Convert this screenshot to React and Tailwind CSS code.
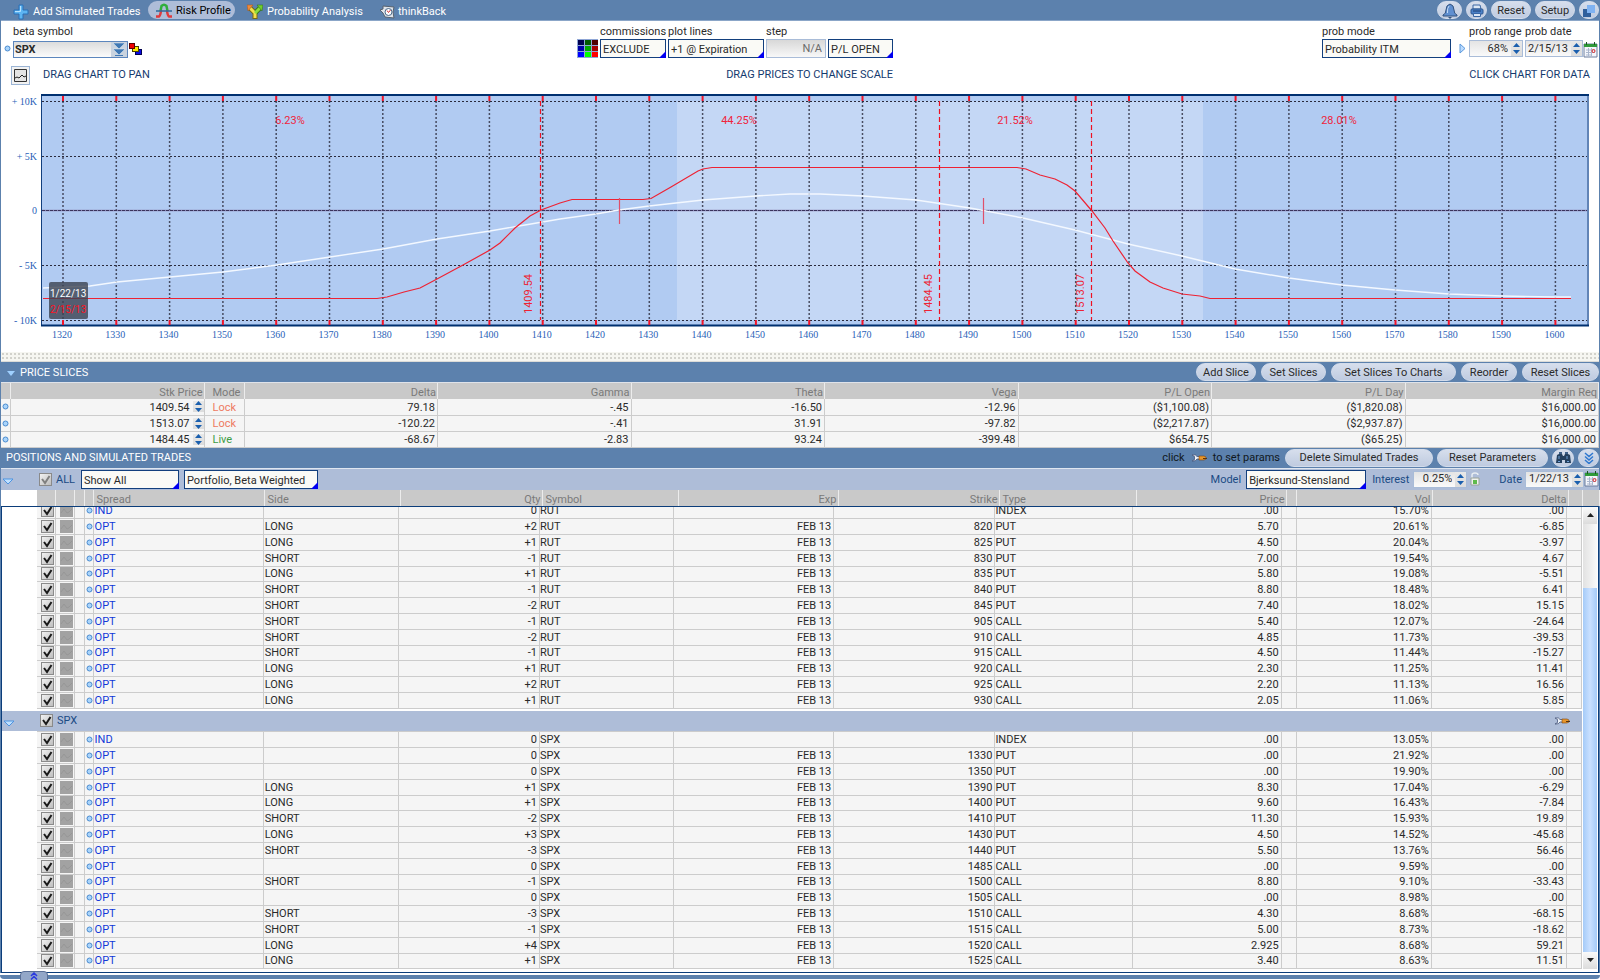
import React from 'react';
import clsx from 'clsx';

const RUT_ROWS = [
  ['IND', '', '0', '', '', 'INDEX', '.00', '15.70%', '.00'],
  ['OPT', 'LONG', '+2', 'FEB 13', '820', 'PUT', '5.70', '20.61%', '-6.85'],
  ['OPT', 'LONG', '+1', 'FEB 13', '825', 'PUT', '4.50', '20.04%', '-3.97'],
  ['OPT', 'SHORT', '-1', 'FEB 13', '830', 'PUT', '7.00', '19.54%', '4.67'],
  ['OPT', 'LONG', '+1', 'FEB 13', '835', 'PUT', '5.80', '19.08%', '-5.51'],
  ['OPT', 'SHORT', '-1', 'FEB 13', '840', 'PUT', '8.80', '18.48%', '6.41'],
  ['OPT', 'SHORT', '-2', 'FEB 13', '845', 'PUT', '7.40', '18.02%', '15.15'],
  ['OPT', 'SHORT', '-1', 'FEB 13', '905', 'CALL', '5.40', '12.07%', '-24.64'],
  ['OPT', 'SHORT', '-2', 'FEB 13', '910', 'CALL', '4.85', '11.73%', '-39.53'],
  ['OPT', 'SHORT', '-1', 'FEB 13', '915', 'CALL', '4.50', '11.44%', '-15.27'],
  ['OPT', 'LONG', '+1', 'FEB 13', '920', 'CALL', '2.30', '11.25%', '11.41'],
  ['OPT', 'LONG', '+2', 'FEB 13', '925', 'CALL', '2.20', '11.13%', '16.56'],
  ['OPT', 'LONG', '+1', 'FEB 13', '930', 'CALL', '2.05', '11.06%', '5.85'],
];

const SPX_ROWS = [
  ['IND', '', '0', '', '', 'INDEX', '.00', '13.05%', '.00'],
  ['OPT', '', '0', 'FEB 13', '1330', 'PUT', '.00', '21.92%', '.00'],
  ['OPT', '', '0', 'FEB 13', '1350', 'PUT', '.00', '19.90%', '.00'],
  ['OPT', 'LONG', '+1', 'FEB 13', '1390', 'PUT', '8.30', '17.04%', '-6.29'],
  ['OPT', 'LONG', '+1', 'FEB 13', '1400', 'PUT', '9.60', '16.43%', '-7.84'],
  ['OPT', 'SHORT', '-2', 'FEB 13', '1410', 'PUT', '11.30', '15.93%', '19.89'],
  ['OPT', 'LONG', '+3', 'FEB 13', '1430', 'PUT', '4.50', '14.52%', '-45.68'],
  ['OPT', 'SHORT', '-3', 'FEB 13', '1440', 'PUT', '5.50', '13.76%', '56.46'],
  ['OPT', '', '0', 'FEB 13', '1485', 'CALL', '.00', '9.59%', '.00'],
  ['OPT', 'SHORT', '-1', 'FEB 13', '1500', 'CALL', '8.80', '9.10%', '-33.43'],
  ['OPT', '', '0', 'FEB 13', '1505', 'CALL', '.00', '8.98%', '.00'],
  ['OPT', 'SHORT', '-3', 'FEB 13', '1510', 'CALL', '4.30', '8.68%', '-68.15'],
  ['OPT', 'SHORT', '-1', 'FEB 13', '1515', 'CALL', '5.00', '8.73%', '-18.62'],
  ['OPT', 'LONG', '+4', 'FEB 13', '1520', 'CALL', '2.925', '8.68%', '59.21'],
  ['OPT', 'LONG', '+1', 'FEB 13', '1525', 'CALL', '3.40', '8.63%', '11.51'],
];

const SLICES = [
  ['1409.54', 'Lock', '79.18', '-.45', '-16.50', '-12.96', '($1,100.08)', '($1,820.08)', '$16,000.00'],
  ['1513.07', 'Lock', '-120.22', '-.41', '31.91', '-97.82', '($2,217.87)', '($2,937.87)', '$16,000.00'],
  ['1484.45', 'Live', '-68.67', '-2.83', '93.24', '-399.48', '$654.75', '($65.25)', '$16,000.00'],
];

/* ---------- icons ---------- */

const PlusIcon = () => (
  <svg width="16" height="16" viewBox="0 0 16 16" className="shrink-0">
    <path d="M6 1h4v5h5v4h-5v5H6v-5H1V6h5z" fill="#5db4f2" stroke="#2a6fb5" />
    <path d="M7.5 2v5.5H2" stroke="#b5e2ff" fill="none" />
  </svg>
);

const RiskIcon = () => (
  <svg width="16" height="16" viewBox="0 0 16 16" className="shrink-0">
    <path d="M4.500 8l1-5q2.500-2.500 5 0l1 5" fill="none" stroke="#2fae3c" strokeWidth="2.500" />
    <path d="M0 13.500h3q1.500-1 2-6M16 13.500h-3q-1.500-1-2-6" fill="none" stroke="#e0393c" strokeWidth="2.500" />
    <path d="M0 8h16" stroke="#2d6a9c" strokeWidth="1.500" />
  </svg>
);

const ForkIcon = () => (
  <svg width="16" height="16" viewBox="0 0 16 16" strokeLinejoin="round" className="shrink-0">
    <path d="M8 15V9L3 4" fill="none" stroke="#7a6a10" strokeWidth="5" />
    <path d="M8 9l5-5" stroke="#3a7d18" strokeWidth="5" />
    <path d="M8 14V9L3 4" fill="none" stroke="#f3e04a" strokeWidth="3" />
    <path d="M0 1h6L1 7z" fill="#f08a3a" stroke="#a8521a" strokeWidth="0.500" />
    <path d="M8 9l5-5" stroke="#8fdc3c" strokeWidth="3" />
    <path d="M16 1h-6l5 6z" fill="#6fcf2e" stroke="#2e6b12" strokeWidth="0.500" />
  </svg>
);

const BackIcon = () => (
  <svg width="15" height="16" viewBox="0 0 15 16" className="shrink-0">
    <path d="M3 2l11 1-1 5 1 6-9-1-2-4-3-3 3-1z" fill="#dfe4ea" stroke="#56616e" />
    <circle cx="8.500" cy="8" r="3.500" fill="#fff" stroke="#4a6a8c" />
    <path d="M7 6.500l1.500 2L10.500 6" stroke="#d03030" fill="none" />
  </svg>
);

const BellIcon = () => (
  <svg width="18" height="16" viewBox="0 0 18 16">
    <path d="M9 1q4 1 4 6 0 4 3 5v1H2v-1q3-1 3-5 0-5 4-6z" fill="#5f8fd0" stroke="#33537f" />
    <path d="M8 3q-2 2-1.500 7" stroke="#c3dbf7" fill="none" />
    <path d="M7 14h4l-2 2z" fill="#33537f" />
  </svg>
);

const PrinterIcon = () => (
  <svg width="14" height="14" viewBox="0 0 14 14">
    <path d="M3 1h7l1 4H3z" fill="#dbe7f5" stroke="#3a67a4" />
    <rect x="1" y="5" width="12" height="5" rx="1" fill="#4b81c8" stroke="#2c568f" />
    <path d="M3.500 9.500h7v3h-7z" fill="#dbe7f5" stroke="#3a67a4" />
    <path d="M3 7h8" stroke="#1e3f70" />
  </svg>
);

const DetachIcon = () => (
  <svg width="12" height="12" viewBox="0 0 12 12">
    <path d="M0 4h8v8H0z" fill="#2f5f9c" />
    <path d="M4 0h8v8H4z" fill="#7fb2f2" />
  </svg>
);

const SquaresIcon = () => (
  <svg width="13" height="12" viewBox="0 0 13 12" shapeRendering="crispEdges">
    <rect x="6" y="6" width="6" height="5" fill="#0a0ae0" stroke="#000050" />
    <path d="M3.500 3.500h6v5h-6z" fill="#ffee00" stroke="#4a4000" />
    <path d="M0.500 0.500h5v5h-5z" fill="#f00000" stroke="#5a0000" />
  </svg>
);

const PaletteIcon = () => (
  <svg width="21" height="19" viewBox="0 0 21 19" shapeRendering="crispEdges">
    <path d="M0 0h21v19H0z" fill="#8fa6d6" />
    {['#000050', '#005a00', '#500000', '#0000a8', '#00a800', '#a80000', '#0000ff', '#00ff00', '#ff0000'].map((c, i) => (
      <rect key={c} x={1 + (i % 3) * 7} y={1 + Math.floor(i / 3) * 6} width="6" height="5" fill={c} />
    ))}
  </svg>
);

const CalendarIcon = () => (
  <svg width="15" height="16" viewBox="0 0 15 16" className="shrink-0">
    <path d="M1 2h13v13H1z" fill="#f4f6fb" stroke="#6c7f9e" />
    <path d="M1 2h13v3H1z" fill="#2f9a3a" />
    <path d="M3.500 0v3M11.500 0v3" stroke="#17591e" />
    <path d="M3 8h9M3 10.500h9M3 13h6M5.500 6v8M8.500 6v8" stroke="#a9b6cd" />
    <circle cx="10.500" cy="9" r="1.500" fill="none" stroke="#e02a2a" />
  </svg>
);

const WrenchIcon = () => (
  <svg width="16" height="8" viewBox="0 0 16 8">
    <path d="M1 1q4-1 5 1.500h3v2.500H6Q5 7.500 1 7l2.500-1.500V2.500z" fill="#eef2f8" stroke="#46557a" strokeWidth="0.800" />
    <path d="M8 2h5l2 1v2l-2 1H8z" fill="#e8962a" stroke="#7a4410" strokeWidth="0.600" />
    <path d="M12 4.500h4" stroke="#5a3410" />
  </svg>
);

const BinocularsIcon = () => (
  <svg width="15" height="12" viewBox="0 0 15 12">
    <path d="M1 3l2-1h3l1 2h1l1-2h3l2 1 1 8H9V8H6v3H0z" fill="#24405f" />
    <path d="M3 4v3M11 4v3M2 9.500h2M11 9.500h2" stroke="#6fa0d8" />
    <path d="M3 0h3v2H3zM9 0h3v2H9z" fill="#3b5d86" />
  </svg>
);

const ChevronsIcon = () => (
  <svg width="10" height="12" viewBox="0 0 10 12">
    <path d="M1 1l4 3.500L9 1M1 4.500L5 8l4-3.500M1 8l4 3.500L9 8" fill="none" stroke="#2f78d0" strokeWidth="1.500" />
  </svg>
);

const LockIcon = () => (
  <svg width="10" height="14" viewBox="0 0 10 14">
    <path d="M2 6V3q0-2 3-2t3 2" fill="none" stroke="#e8edf2" strokeWidth="1.500" />
    <path d="M1 6h8v7H1z" fill="#f0f2ee" stroke="#9aa39a" />
    <path d="M3 8h4v4H3z" fill="#5fba4c" />
  </svg>
);

const Dot = () => (
  <svg width="7" height="7" viewBox="0 0 7 7" className="block shrink-0">
    <circle cx="3.500" cy="3.500" r="2.500" fill="#a9d4fb" stroke="#4a8bd0" />
  </svg>
);

const Collapse = () => (
  <svg width="12" height="7" viewBox="0 0 12 7">
    <path d="M1 1h10L6 6z" fill="#bfe0ff" stroke="#4d93e0" />
  </svg>
);

/* ---------- controls ---------- */

const PillButton = ({ className, children, ...rest }) => (
  <button
    type="button"
    className={clsx(
      'flex h-[18px] items-center justify-center whitespace-nowrap rounded-full border border-[#d3dceb] bg-gradient-to-b from-[#d6deec] to-[#bfcbe0] pt-px text-[#2a2a2a]',
      className
    )}
    {...rest}
  >
    {children}
  </button>
);

const Picker = ({ className, value, ...rest }) => (
  <span className={clsx('relative block h-[19px] shrink-0', className)}>
    <select
      className="block h-full w-full appearance-none border border-[#123f7d] bg-[#fafaf6] pl-[2px] pt-[2px] text-[11px] leading-[15px] text-[#2a2a2a] outline-none"
      defaultValue={value}
      {...rest}
    >
      <option>{value}</option>
    </select>
    <svg width="7" height="7" viewBox="0 0 7 7" className="pointer-events-none absolute bottom-0 right-0">
      <path d="M7 0v7H0z" fill="#0000f0" />
    </svg>
  </span>
);

const Arrows = () => (
  <span className="flex w-[11px] shrink-0 flex-col justify-center gap-[3px] bg-gradient-to-b from-[#e8e8e8] to-[#dcdcdc]">
    <button type="button" aria-label="Increase">
      <svg width="7" height="4" viewBox="0 0 7 4" className="mx-auto block"><path d="M0 4l3.500-4L7 4z" fill="#1a5fae" /></svg>
    </button>
    <button type="button" aria-label="Decrease">
      <svg width="7" height="4" viewBox="0 0 7 4" className="mx-auto block"><path d="M0 0h7L3.500 4z" fill="#1a5fae" /></svg>
    </button>
  </span>
);

const Spinner = ({ className, value, ...rest }) => (
  <span className={clsx('flex h-[17px] shrink-0 border border-[#a9bcd8] bg-gradient-to-b from-[#e4e4e4] to-[#fafafa]', className)}>
    <input className="w-full min-w-0 bg-transparent pr-[3px] text-right outline-none" defaultValue={value} {...rest} />
    <Arrows />
  </span>
);

const Check = ({ label, dim }) => (
  <span className="relative block size-[13px] shrink-0">
    <input
      type="checkbox"
      aria-label={label}
      defaultChecked
      className="block size-[13px] appearance-none border border-[#8a8a8a] bg-gradient-to-br from-[#f2f2f2] to-[#bdbdbd]"
    />
    <svg width="13" height="13" viewBox="0 0 13 13" className="pointer-events-none absolute inset-0">
      <path d="M3 6l3 4 4.500-7" fill="none" stroke={dim ? '#808080' : '#1a1a1a'} strokeWidth="2" />
    </svg>
  </span>
);

const Field = ({ label, className, children }) => (
  <label className={clsx('flex flex-col whitespace-nowrap', className)}>
    <span className="h-[14px] leading-[14px]">{label}</span>
    {children}
  </label>
);

/* ---------- header ---------- */

const TopBar = () => (
  <header className="flex h-[21px] items-center justify-between border-b border-[#8ba6c8] bg-[#5c81ad] text-white">
    <nav className="flex items-center whitespace-nowrap">
      <button type="button" className="flex w-[135px] items-center gap-1 pl-[12px] pt-[3px]"><PlusIcon />Add Simulated Trades</button>
      <button type="button" className="ml-[12px] flex h-[18px] w-[87px] items-center gap-1 rounded-full bg-[#aebdd8] pl-[8px] pt-[2px] text-black">
        <RiskIcon />Risk Profile
      </button>
      <button type="button" className="ml-[12px] flex w-[121px] items-center gap-1 pt-[3px]"><ForkIcon />Probability Analysis</button>
      <button type="button" className="ml-[12px] flex items-center gap-[3px] pt-[3px]"><BackIcon />thinkBack</button>
    </nav>
    <div className="flex items-center gap-1">
      <PillButton className="w-[25px]" aria-label="Alerts"><BellIcon /></PillButton>
      <PillButton className="w-[21px]" aria-label="Print"><PrinterIcon /></PillButton>
      <PillButton className="w-[40px]">Reset</PillButton>
      <PillButton className="w-[40px]">Setup</PillButton>
      <PillButton className="w-[20px]" aria-label="Detach"><DetachIcon /></PillButton>
    </div>
  </header>
);

const Controls = () => (
  <section className="flex h-[41px] items-start justify-between pt-1 pr-px">
    <div className="flex w-[147px] items-end pl-[3px]">
      <span className="mb-[6px] mr-[2px]"><Dot /></span>
      <Field label="beta symbol" className="w-[115px]">
        <span className="mt-[2px] flex h-[17px] border border-[#5c86bd] bg-gradient-to-b from-[#dcdcdc] to-[#fbfbfb]">
          <input className="w-full min-w-0 bg-transparent pl-px font-bold outline-none" defaultValue="SPX" />
          <span className="flex w-[16px] shrink-0 items-center justify-center bg-[#c9d3df]">
            <svg width="12" height="13" viewBox="0 0 12 13">
              <path d="M0 0h12L6 6zM0 6h12l-6 6z" fill="#3f78b4" stroke="#e5eef7" strokeWidth="0.500" />
              <path d="M2 12.500h8" stroke="#3f78b4" />
            </svg>
          </span>
        </span>
      </Field>
      <span className="mb-[3px] ml-px"><SquaresIcon /></span>
    </div>

    <div className="flex items-end gap-[2px]">
      <PaletteIcon />
      <Field label="commissions" className="w-[66px]"><Picker value="EXCLUDE" /></Field>
      <Field label="plot lines" className="w-[96px]"><Picker value="+1 @ Expiration" /></Field>
      <Field label="step" className="w-[60px]">
        <input
          className="h-[19px] w-full border border-[#a9bcd8] bg-gradient-to-b from-[#d8d8d8] to-[#f8f8f8] pr-[3px] text-right text-[#6a6a6a] outline-none"
          defaultValue="N/A"
        />
      </Field>
      <Picker className="w-[65px]" value="P/L OPEN" aria-label="P/L display" />
    </div>

    <div className="flex items-end">
      <Field label="prob mode" className="w-[129px]"><Picker value="Probability ITM" /></Field>
      <svg width="7" height="11" viewBox="0 0 7 11" className="mb-1 ml-[8px] mr-[3px]">
        <path d="M1 1l5 4.500L1 10z" fill="#bcdcff" stroke="#5b98dc" />
      </svg>
      <Field label="prob range" className="mr-[2px] w-[54px]"><Spinner className="mb-px mt-px" value="68%" /></Field>
      <Field label="prob date" className="w-[58px]"><Spinner className="mb-px mt-px" value="2/15/13" /></Field>
      <CalendarIcon />
    </div>
  </section>
);

const Hints = () => (
  <section className="flex h-[24px] items-center justify-between pl-[10px] pr-[9px] pt-[2px] text-[#143a6e]">
    <div className="flex items-center gap-[13px]">
      <button type="button" aria-label="Chart style" className="flex size-[19px] items-center justify-center border border-[#9bb4d4] bg-[#f2f2f2]">
        <svg width="13" height="13" viewBox="0 0 13 13">
          <path d="M0.500 0.500h12v12h-12z" fill="#e4e4e4" stroke="#333" />
          <path d="M1 9l2-1 2 1 3-3 2 2 2-1" fill="none" stroke="#222" />
        </svg>
      </button>
      DRAG CHART TO PAN
    </div>
    <span>DRAG PRICES TO CHANGE SCALE</span>
    <span>CLICK CHART FOR DATA</span>
  </section>
);

/* ---------- chart ---------- */

const priceX = (p) => 63 + (p - 1320) * 5.33;
const PRICES = Array.from({ length: 29 }, (_, i) => 1320 + i * 10);
const LEVELS = [['+ 10K', 101], ['+ 5K', 156], ['0', 210], ['- 5K', 265], ['- 10K', 320]];
const ZONES = [['6.23%', 290], ['44.25%', 739], ['21.52%', 1015], ['28.01%', 1339]];
const MARKS = [['1409.54', 540.5, 532], ['1484.45', 939.5, 932], ['1513.07', 1091.5, 1084]];

const TODAY_LINE = '43,288 90,286 117,282 170,277 223,272 277,265 330,257 383,249 437,239 490,231 525,225 560,219 596,214 619,210 649,206 703,200 756,196 790,194 820,194 863,196 916,200 970,208 1023,218 1075,230 1128,244 1182,256 1235,269 1289,278 1342,285 1395,290 1449,294 1502,296 1555,297 1571,297';
const EXPIRY_LINE = '43,298.5 377,298.5 387,297 404,292 420,288 437,279 463,265 490,250 500,243 515,228 530,216 541,210 560,203 572,199.5 643,199.5 651,198.5 671,187 698,171 703,169 712,167.5 1017,167.5 1026,169 1040,175 1055,179 1067,185 1075,191 1092,211 1105,228 1113,241 1128,263 1135,271 1150,282 1163,288 1182,294 1200,296 1210,298.5 1571,298.5';

const RiskChart = () => (
  <svg viewBox="1 86 1598 266" className="block w-full" fontSize="11">
    <rect x="41" y="94" width="1548" height="232" fill="#b1cbf2" />
    <rect x="677" y="101" width="526" height="219" fill="#c4d7f5" />

    <g stroke="#2a2a3c" strokeDasharray="2 2">
      {PRICES.map((p) => <path key={p} d={`M${priceX(p)} 101V320`} strokeWidth="1.500" strokeOpacity="0.800" />)}
      {LEVELS.map(([t, y]) => t !== '0' && <path key={t} d={`M42 ${y + 0.5}H1587`} strokeWidth="1.200" />)}
    </g>
    <path d="M42 210.500H1587" stroke="#8a84b4" strokeWidth="1.500" />
    <path d="M42 210.500H1587" stroke="#3a345c" strokeDasharray="3 1" />

    <polyline points={TODAY_LINE} fill="none" stroke="#f3f8ff" strokeWidth="1.400" />
    <polyline points={EXPIRY_LINE} fill="none" stroke="#ee2233" strokeWidth="1.200" />
    <path d="M619.500 198V224M983.500 198V224" stroke="#e0506a" strokeWidth="1.200" />

    {MARKS.map(([t, x, tx]) => (
      <g key={t}>
        <path d={`M${x} 101V320`} stroke="#ee1122" strokeWidth="1.200" strokeDasharray="5 3" />
        <text transform={`translate(${tx} 314) rotate(-90)`} fill="#ee2233">{t}</text>
      </g>
    ))}
    {ZONES.map(([t, x]) => <text key={t} x={x} y="124" textAnchor="middle" fill="#f0233c">{t}</text>)}

    <path d="M41.500 326V95M1588 95V326" stroke="#123f7d" />
    <path d="M41 95H1589M41 325.500H1589" stroke="#003070" strokeWidth="2" />
    {PRICES.map((p) => <path key={p} d={`M${priceX(p)} 96V101M${priceX(p)} 320V325`} stroke="#f0142a" strokeWidth="2" />)}

    <rect x="49" y="282" width="39" height="37" rx="2" fill="#3c4250" fillOpacity="0.800" />
    <text x="50" y="297" fontSize="10" fill="#fff">1/22/13</text>
    <text x="50" y="313" fontSize="10" fill="#ff1122">2/15/13</text>

    <g fill="#2a5fb8" fontSize="10" className="font-['Liberation_Serif',serif]">
      {LEVELS.map(([t, y]) => <text key={t} x="37" y={y + 4} textAnchor="end">{t}</text>)}
      {PRICES.map((p) => <text key={p} x={priceX(p) - 1} y="338" textAnchor="middle">{p}</text>)}
    </g>
  </svg>
);

/* ---------- tables ---------- */

const SLICE_HEADS = ['Stk Price', 'Mode', 'Delta', 'Gamma', 'Theta', 'Vega', 'P/L Open', 'P/L Day', 'Margin Req'];

const PriceSlices = () => (
  <section>
    <div className="flex h-[21px] items-center border-b border-[#dfe3ea] bg-[#5c81ad] pl-[6px] text-white">
      <svg width="8" height="5" viewBox="0 0 8 5" className="mt-[3px]"><path d="M0 0h8L4 5z" fill="#9fd0ff" /></svg>
      <h2 className="ml-[5px] flex-1 pt-[2px]">PRICE SLICES</h2>
      <div className="flex gap-[5px]">
        <PillButton className="w-[60px]">Add Slice</PillButton>
        <PillButton className="w-[65px]">Set Slices</PillButton>
        <PillButton className="w-[125px]">Set Slices To Charts</PillButton>
        <PillButton className="w-[56px]">Reorder</PillButton>
        <PillButton className="w-[77px]">Reset Slices</PillButton>
      </div>
    </div>
    <table className="w-full table-fixed border-collapse text-right">
      <colgroup>
        <col className="w-[9px]" />
        <col className="w-[194px]" />
        <col className="w-[40px]" />
        <col span="7" />
      </colgroup>
      <thead>
        <tr className="h-[16px] bg-[#c9c9c9] leading-[13px] text-[#7a7a7a]">
          <th className="border-r border-[#ececec] p-0" aria-label="Marker" />
          {SLICE_HEADS.map((h) => (
            <th key={h} className={clsx('border-r border-[#ececec] p-0 pt-[2px] font-normal', h === 'Mode' ? 'pl-[8px] text-left' : 'pr-px')}>{h}</th>
          ))}
        </tr>
      </thead>
      <tbody>
        {SLICES.map(([price, mode, ...rest]) => (
          <tr key={price} className="h-[16px] border-b border-[#cccccc] bg-[#f5f5f5] leading-[13px]">
            <td className="border-r border-[#cccccc] p-0 pl-px"><Dot /></td>
            <td className="border-r border-[#cccccc] p-0">
              <span className="flex items-center justify-end gap-[3px]"><span className="pt-px">{price}</span><Arrows /></span>
            </td>
            <td className={clsx('border-r border-[#cccccc] p-0 pl-[8px] pt-px text-left', mode === 'Lock' ? 'text-[#ee7a62]' : 'text-[#3c9c44]')}>{mode}</td>
            {rest.map((v, i) => <td key={i} className="border-r border-[#cccccc] p-0 pr-[2px] pt-px">{v}</td>)}
          </tr>
        ))}
      </tbody>
    </table>
  </section>
);

const PositionsBar = () => (
  <div className="flex h-[20px] items-center bg-[#5c81ad] pl-[5px]">
    <h2 className="flex-1 pt-px text-white">POSITIONS AND SIMULATED TRADES</h2>
    <p className="mr-[5px] flex items-center gap-[6px] pt-px text-[#101820]">click <WrenchIcon /> to set params</p>
    <div className="flex gap-1">
      <PillButton className="w-[148px]">Delete Simulated Trades</PillButton>
      <PillButton className="w-[111px]">Reset Parameters</PillButton>
      <PillButton className="w-[22px]" aria-label="Find"><BinocularsIcon /></PillButton>
      <PillButton className="w-[21px]" aria-label="Expand"><ChevronsIcon /></PillButton>
    </div>
  </div>
);

const FilterBar = () => (
  <div className="flex h-[22px] items-center border-t border-[#dfe6f0] bg-[#aebdd8] text-[#1b4b84]">
    <button type="button" aria-label="Collapse all" className="w-[38px] pl-px pt-1"><Collapse /></button>
    <Check label="Select all" dim />
    <span className="ml-1 w-[25px] pt-px">ALL</span>
    <Picker className="w-[98px]" value="Show All" aria-label="Filter" />
    <Picker className="ml-[5px] w-[134px]" value="Portfolio, Beta Weighted" aria-label="Weighting" />
    <div className="flex flex-1 items-center justify-end">
      <label htmlFor="model" className="mr-[5px] pt-px">Model</label>
      <Picker className="mr-[6px] w-[120px]" value="Bjerksund-Stensland" id="model" />
      <label htmlFor="interest" className="mr-[4px] pt-px">Interest</label>
      <Spinner className="mr-[3px] w-[54px] text-[#2a2a2a]" value="0.25%" id="interest" />
      <LockIcon />
      <label htmlFor="date" className="ml-[19px] mr-[3px] pt-px">Date</label>
      <Spinner className="w-[59px] text-[#2a2a2a]" value="1/22/13" id="date" />
      <CalendarIcon />
    </div>
  </div>
);

const POSITION_HEADS = [
  ['Spread', 'w-[171px]'], ['Side', 'w-[136px]'], ['Qty', 'w-[142px]', true], ['Symbol', 'w-[136px]'],
  ['Exp', 'w-[160px]', true], ['Strike', 'w-[161px]', true], ['Type', 'w-[137px]'], ['Price', 'w-[150px]', true],
  ['', 'w-[10px]'], ['Vol', 'w-[136px]', true], ['Delta', 'w-[136px]', true], ['', 'w-[14px]'], ['', 'w-[17px]'],
];

const PositionHeader = () => (
  <table className="w-full table-fixed border-collapse leading-[13px] text-[#7a7a7a]">
    <colgroup>
      <col className="w-[36px]" />
      <col className="w-[18px]" />
      <col className="w-[19px]" />
      <col className="w-[10px]" />
      <col className="w-[9px]" />
      {POSITION_HEADS.map(([, w], i) => <col key={i} className={w} />)}
    </colgroup>
    <thead>
      <tr className="h-[16px] bg-[#c9c9c9]">
        <th className="bg-white p-0" />
        {[0, 1, 2, 3].map((i) => <th key={i} className="border-r border-[#ececec] p-0" />)}
        {POSITION_HEADS.map(([h, , right], i) => (
          <th key={i} className={clsx('border-r border-[#ececec] p-0 pt-[3px] font-normal', right ? 'pr-px text-right' : 'pl-[3px] text-left')}>{h}</th>
        ))}
      </tr>
    </thead>
  </table>
);

const Cell = ({ className, children }) => (
  <td className={clsx('border-y border-r border-[#cccccc] p-0', className)}>{children}</td>
);

const PositionRow = ({ row, symbol, short }) => {
  const [spread, side, qty, exp, strike, type, price, vol, delta] = row;
  return (
    <tr className={clsx('bg-[#f5f5f5]', short ? 'h-[15px]' : 'h-[16px]')}>
      <td className="bg-white p-0" />
      <Cell className="pl-[4px]"><Check label={`${symbol} ${strike} ${type}`} /></Cell>
      <Cell className="pl-[4px]">
        <svg width="13" height="13" viewBox="0 0 13 13" className="block">
          <path d="M0 0h13v13H0z" fill="#a2a2a2" />
          <path d="M1 9l3-4 3 4 2-1 3-3" fill="none" stroke="#979797" />
        </svg>
      </Cell>
      <Cell />
      <Cell className="pl-px"><Dot /></Cell>
      <Cell className="pl-px text-[#1238d8]">{spread}</Cell>
      <Cell className="pl-px">{side}</Cell>
      <Cell className="pr-[2px] text-right">{qty}</Cell>
      <Cell>{symbol}</Cell>
      <Cell className="pr-[2px] text-right">{exp}</Cell>
      <Cell className="pr-[2px] text-right">{strike}</Cell>
      <Cell>{type}</Cell>
      <Cell className="pr-[2px] text-right">{price}</Cell>
      <Cell />
      <Cell className="pr-[2px] text-right">{vol}</Cell>
      <Cell className="pr-[2px] text-right">{delta}</Cell>
      <Cell />
    </tr>
  );
};

const ScrollBar = () => (
  <div className="flex w-[14px] shrink-0 flex-col">
    <button type="button" aria-label="Scroll up" className="flex h-[17px] items-center justify-center bg-gradient-to-b from-[#fafafa] to-[#dcdcdc]">
      <svg width="7" height="4" viewBox="0 0 7 4"><path d="M0 4l3.500-4L7 4z" fill="#222" /></svg>
    </button>
    <div className="h-[64px] bg-gradient-to-r from-[#e2e2e2] to-[#fafafa]" />
    <div className="flex-1 bg-gradient-to-r from-[#a5cbf8] via-[#c9e0ff] to-[#a5cbf8]" />
    <button type="button" aria-label="Scroll down" className="flex h-[17px] items-center justify-center bg-gradient-to-b from-[#fafafa] to-[#dcdcdc]">
      <svg width="7" height="4" viewBox="0 0 7 4"><path d="M0 0h7L3.500 4z" fill="#222" /></svg>
    </button>
  </div>
);

const Positions = () => (
  <div className="flex overflow-hidden border border-[#0b3d7a] bg-white pb-[3px] pr-px">
    <table className="-mt-[5px] mr-px w-full table-fixed border-collapse leading-[13px]">
      <colgroup>
        <col className="w-[35px]" />
        <col className="w-[18px]" />
        <col className="w-[19px]" />
        <col className="w-[10px]" />
        <col className="w-[9px]" />
        <col className="w-[170px]" />
        <col className="w-[135px]" />
        <col className="w-[141px]" />
        <col className="w-[134px]" />
        <col className="w-[160px]" />
        <col className="w-[161px]" />
        <col className="w-[137px]" />
        <col className="w-[149px]" />
        <col className="w-[15px]" />
        <col className="w-[135px]" />
        <col className="w-[135px]" />
        <col className="w-[15px]" />
      </colgroup>
      <tbody>
        {RUT_ROWS.map((row, i) => <PositionRow key={i} row={row} symbol="RUT" short={i % 5 === 4} />)}
        <tr className="h-[3px]"><td colSpan="17" className="p-0" /></tr>
        <tr className="h-[20px] bg-[#aebdd8] text-[#1b4b84]">
          <td className="p-0 pl-px pt-1"><button type="button" aria-label="Collapse SPX" className="block"><Collapse /></button></td>
          <td colSpan="14" className="p-0 pl-[3px]"><span className="flex items-center gap-1"><Check label="SPX" />SPX</span></td>
          <td colSpan="2" className="p-0 pr-[12px]"><span className="flex justify-end"><WrenchIcon /></span></td>
        </tr>
        {SPX_ROWS.map((row, i) => <PositionRow key={i} row={row} symbol="SPX" short={i % 5 === 4} />)}
      </tbody>
    </table>
    <ScrollBar />
  </div>
);

export default function App() {
  return (
    <div className="flex min-h-screen w-full flex-col overflow-hidden bg-white font-[Roboto,'Liberation_Sans',sans-serif] text-[11px] leading-[14px] text-[#2a2a2a]">
      <main className="border-x border-[#5c81ad]">
        <TopBar />
        <Controls />
        <Hints />
        <RiskChart />
        <div className="h-[10px] border-b border-[#dcdcd8] bg-[#f6f6f1] bg-[radial-gradient(#d2d2cc_1px,transparent_1px)] bg-[size:4px_4px]" />
        <PriceSlices />
        <PositionsBar />
        <FilterBar />
        <PositionHeader />
        <Positions />
      </main>
      <footer className="relative mt-[2px] h-[4px] rounded-b bg-[#5c81ad]">
        <button
          type="button"
          aria-label="Show panel"
          className="absolute -top-1 left-[20px] flex h-[10px] w-[28px] items-center justify-center overflow-hidden rounded-t border border-[#5a6f96] bg-[#93a7c8]"
        >
          <svg width="8" height="8" viewBox="0 0 8 8"><path d="M1 4l3-3 3 3M1 7.500l3-3 3 3" fill="none" stroke="#2a3ae0" strokeWidth="1.500" /></svg>
        </button>
      </footer>
    </div>
  );
}
